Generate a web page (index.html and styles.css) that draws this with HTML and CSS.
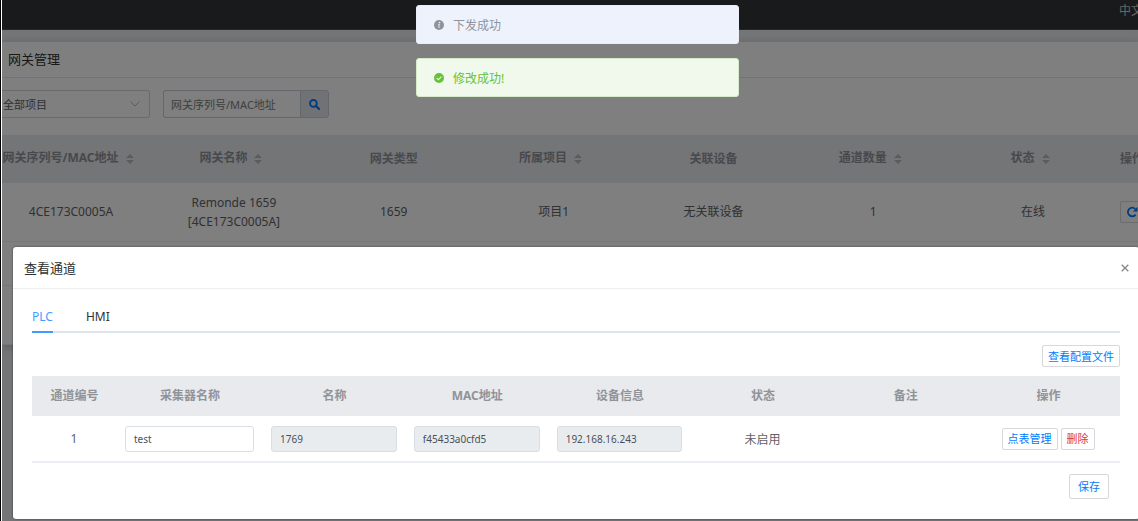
FILE: index.html
```html
<!DOCTYPE html>
<html lang="zh-CN">
<head>
<meta charset="utf-8">
<title>网关管理</title>
<link rel="stylesheet" href="styles.css">
</head>
<body>
<svg class="sprite" aria-hidden="true">
  <symbol id="sort" viewBox="0 0 8 10"><path d="M4 0l4 4H0zM4 10l4-4H0z" fill="currentColor"/></symbol>
</svg>
<div class="page">
  <header class="topbar"><span>中文</span></header>
  <main class="card">
    <h1 class="card-title">网关管理</h1>
    <form class="filters">
      <div class="select-wrap">
        <select class="select" aria-label="项目"><option>全部项目</option></select>
        <svg class="chevron" viewBox="0 0 10 6" width="10" height="6"><path d="M.5.5L5 5 9.500.5" fill="none" stroke="#b4b8c0"/></svg>
      </div>
      <div class="search">
        <input class="search-input" type="text" placeholder="网关序列号/MAC地址" aria-label="网关序列号/MAC地址">
        <button class="search-btn" type="button" aria-label="搜索">
          <svg viewBox="0 0 12 12" width="11" height="11"><circle cx="4.800" cy="4.800" r="3.700" fill="none" stroke="#007bff" stroke-width="2"/><path d="M7.600 7.600L11 11" stroke="#007bff" stroke-width="2.400" stroke-linecap="round"/></svg>
        </button>
      </div>
    </form>
    <table class="gateways">
      <colgroup><col class="g-first"><col><col><col><col><col><col><col class="g-last"></colgroup>
      <thead>
        <tr>
          <th class="sortable">网关序列号/MAC地址<svg class="sort"><use href="#sort"/></svg></th>
          <th class="sortable">网关名称<svg class="sort"><use href="#sort"/></svg></th>
          <th>网关类型</th>
          <th class="sortable">所属项目<svg class="sort"><use href="#sort"/></svg></th>
          <th>关联设备</th>
          <th class="sortable">通道数量<svg class="sort"><use href="#sort"/></svg></th>
          <th class="sortable">状态<svg class="sort"><use href="#sort"/></svg></th>
          <th class="ops">操作</th>
        </tr>
      </thead>
      <tbody>
        <tr class="row">
          <td>4CE173C0005A</td>
          <td>Remonde 1659<br>[4CE173C0005A]</td>
          <td>1659</td>
          <td>项目1</td>
          <td>无关联设备</td>
          <td>1</td>
          <td>在线</td>
          <td class="ops"><button class="btn refresh" type="button" aria-label="刷新">
            <svg viewBox="0 0 12 12" width="12" height="12"><path d="M9.600 8.600A4.300 4.300 0 1 1 9.300 3" fill="none" stroke="#007bff" stroke-width="1.800"/><path d="M11.500.8v4.600H6.900z" fill="#007bff"/></svg>
          </button></td>
        </tr>
        <tr class="blank"><td colspan="8"></td></tr>
        <tr class="blank-last"><td colspan="8"></td></tr>
      </tbody>
    </table>
  </main>
</div>
<div class="mask"></div>

<section class="modal" role="dialog" aria-labelledby="modal-title">
  <header class="modal-head">
    <h2 id="modal-title">查看通道</h2>
    <button class="close" type="button" aria-label="关闭"><svg viewBox="0 0 8 8" width="8" height="8"><path d="M.7.7l6.600 6.600M7.300.7L.7 7.300" stroke="#85878a" stroke-width="1.300"/></svg></button>
  </header>
  <div class="modal-body">
    <nav class="tabs" role="tablist">
      <button class="tab active" type="button" role="tab" aria-selected="true">PLC</button>
      <button class="tab" type="button" role="tab" aria-selected="false">HMI</button>
    </nav>
    <div class="toolbar"><button class="btn" type="button">查看配置文件</button></div>
    <table class="channels">
      <colgroup><col class="c-number"><col class="c-collector"><col><col><col><col><col><col></colgroup>
      <thead>
        <tr><th>通道编号</th><th>采集器名称</th><th>名称</th><th>MAC地址</th><th>设备信息</th><th>状态</th><th>备注</th><th>操作</th></tr>
      </thead>
      <tbody>
        <tr>
          <td>1</td>
          <td><input class="field" type="text" value="test" aria-label="采集器名称"></td>
          <td><input class="field" type="text" value="1769" aria-label="名称" disabled></td>
          <td><input class="field" type="text" value="f45433a0cfd5" aria-label="MAC地址" disabled></td>
          <td><input class="field" type="text" value="192.168.16.243" aria-label="设备信息" disabled></td>
          <td>未启用</td>
          <td></td>
          <td><div class="actions"><button class="btn" type="button">点表管理</button><button class="btn danger" type="button">删除</button></div></td>
        </tr>
      </tbody>
    </table>
    <div class="modal-foot"><button class="btn save" type="button">保存</button></div>
  </div>
</section>

<div class="messages">
  <div class="message info" role="status">
    <svg viewBox="0 0 10 10" width="10" height="10"><circle cx="5" cy="5" r="5" fill="#909399"/><circle cx="5.600" cy="2.600" r=".8" fill="#edf2fc"/><path d="M4.200 4.400h1.200L4.700 7.400h.8" fill="none" stroke="#edf2fc" stroke-width=".9"/></svg>
    <span>下发成功</span>
  </div>
  <div class="message success" role="status">
    <svg viewBox="0 0 10 10" width="10" height="10"><circle cx="5" cy="5" r="5" fill="#67c23a"/><path d="M2.700 5.100l1.700 1.600 3-3.100" fill="none" stroke="#f0f9eb" stroke-width="1.100"/></svg>
    <span>修改成功!</span>
  </div>
</div>
</body>
</html>
```
FILE: styles.css
```css
* { box-sizing: border-box; }
html, body { height: 100%; }
body {
  margin: 0;
  position: relative;
  overflow: hidden;
  background: #fff;
  border-left: 1px solid #000;
  padding-left: 1px;
  font-family: "Noto Sans", "Noto Sans CJK SC", sans-serif;
  font-size: 12px;
  color: #606266;
}
button, input, select { font-family: inherit; }
.sprite { position: absolute; width: 0; height: 0; }

.page { min-height: 100%; background: #e8eaee; overflow: hidden; }
.topbar {
  height: 30px;
  padding: 2px 0 0;
  display: flex;
  justify-content: flex-end;
  background: #323438;
  border-bottom: 1px solid #4a4c50;
  color: #ccc;
  line-height: 18px;
}
.topbar span { margin-right: -5px; }
.card {
  margin: 11px 0 0;
  background: #fff;
  border-top: 1px solid #dfe1e6;
  box-shadow: 0 2px 8px rgba(0, 0, 0, .2);
}
.card-title {
  margin: 0;
  padding: 0 6px;
  font-size: 13px;
  font-weight: 400;
  line-height: 35px;
  color: #303133;
  border-bottom: 1px solid #e4e6ea;
}
.filters { display: flex; gap: 13px; padding: 12px 0 17px; }
.select-wrap { position: relative; width: 148px; }
.select {
  appearance: none;
  width: 100%;
  height: 28px;
  padding: 0 1px;
  border: 1px solid #d3d6dc;
  border-left: 0;
  border-radius: 0 3px 3px 0;
  background: #fff;
  color: #606266;
  font-size: 11px;
}
.chevron { position: absolute; right: 10px; top: 11px; }
.search { display: flex; height: 28px; width: 166px; }
.search-input {
  flex: 1;
  min-width: 0;
  padding: 0 7px;
  border: 1px solid #c9ced6;
  border-right: 0;
  border-radius: 3px 0 0 3px;
  background: #fff;
  font-size: 11px;
}
.search-input::placeholder { color: #7b7e84; }
.search-btn {
  width: 29px;
  padding: 0;
  display: flex;
  align-items: center;
  justify-content: center;
  border: 1px solid #c9ced6;
  border-radius: 0 3px 3px 0;
  background: #e2e5ea;
}

table { border-collapse: collapse; table-layout: fixed; }
th { font-weight: 700; color: #909399; }
th, td { text-align: center; }
.gateways { width: calc(100% + 169px); margin-left: -14px; }
.g-first { width: 166px; }
.g-last { width: 180px; }
.gateways th { height: 48px; padding: 0 0 2px; background: #e8eaee; white-space: nowrap; }
.gateways th.sortable { padding: 0 6px 4px 0; }
.gateways td { height: 58px; padding: 0; border-bottom: 1px solid #ebeef5; line-height: 19px; }
.gateways .ops { text-align: left; padding-left: 7px; }
.gateways .blank td { height: 44px; }
.gateways .blank-last td { height: 59px; }
.sort { width: 8px; height: 10px; margin-left: 7px; vertical-align: -2px; color: #b4b8c0; }

.btn {
  height: 22px;
  padding: 1px 5px 0;
  border: 1px solid #d6d8db;
  border-radius: 2px;
  background: #fff;
  color: #007bff;
  font-size: 11px;
  line-height: 18px;
  white-space: nowrap;
}
.btn.danger { color: #dc3545; }
.btn.save { height: 25px; padding: 0 8px; }
.refresh { display: flex; align-items: center; }

.mask { position: absolute; inset: 0 0 0 1px; background: rgba(0, 0, 0, .5); }

.modal {
  position: absolute;
  left: 12px;
  right: -1px;
  top: 247px;
  background: #fff;
  border-radius: 3px;
  box-shadow: 0 0 2px rgba(0, 0, 0, .6);
}
.modal-head {
  display: flex;
  align-items: center;
  justify-content: space-between;
  height: 42px;
  padding: 0 10px 0 11px;
  border-bottom: 1px solid #eceef0;
}
.modal-head h2 { margin: 0; font-size: 13px; font-weight: 400; color: #303133; }
.close { display: flex; padding: 0; border: 0; background: none; }
.modal-body { padding: 14px 19px 20px; }
.tabs { display: flex; gap: 33px; border-bottom: 2px solid #dfe4ed; }
.tab {
  height: 30px;
  margin-bottom: -2px;
  padding: 0 0 2px;
  border: 0;
  border-bottom: 2px solid transparent;
  background: none;
  color: #303133;
  font-size: 12px;
}
.tab.active { color: #409eff; border-color: #409eff; }
.toolbar { display: flex; justify-content: flex-end; padding: 12px 0 9px; }
.channels { width: 100%; }
.c-number { width: 85px; }
.c-collector { width: 146px; }
.channels th { height: 40px; padding: 0 0 2px; background: #e8eaed; }
.channels td { height: 46px; padding: 0 9px 0 8px; border-bottom: 2px solid #ebeef5; }
.field {
  display: block;
  width: 100%;
  height: 26px;
  padding: 0 8px;
  border: 1px solid #d8dee4;
  border-radius: 3px;
  background: #fff;
  color: #495057;
  font-size: 10px;
}
.field:disabled { background: #e9ecef; }
.actions { display: flex; justify-content: center; gap: 3px; }
.modal-foot { display: flex; justify-content: flex-end; padding: 11px 11px 0; }

.messages {
  position: absolute;
  top: 5px;
  left: 415px;
  width: 323px;
  display: flex;
  flex-direction: column;
  gap: 14px;
}
.message {
  display: flex;
  align-items: center;
  gap: 9px;
  height: 39px;
  padding: 0 17px;
  border: 1px solid #ebeef5;
  border-radius: 3px;
}
.message.info { background: #edf2fc; color: #909399; }
.message.success { background: #f0f9eb; border-color: #d5ebc9; color: #67c23a; }
```
